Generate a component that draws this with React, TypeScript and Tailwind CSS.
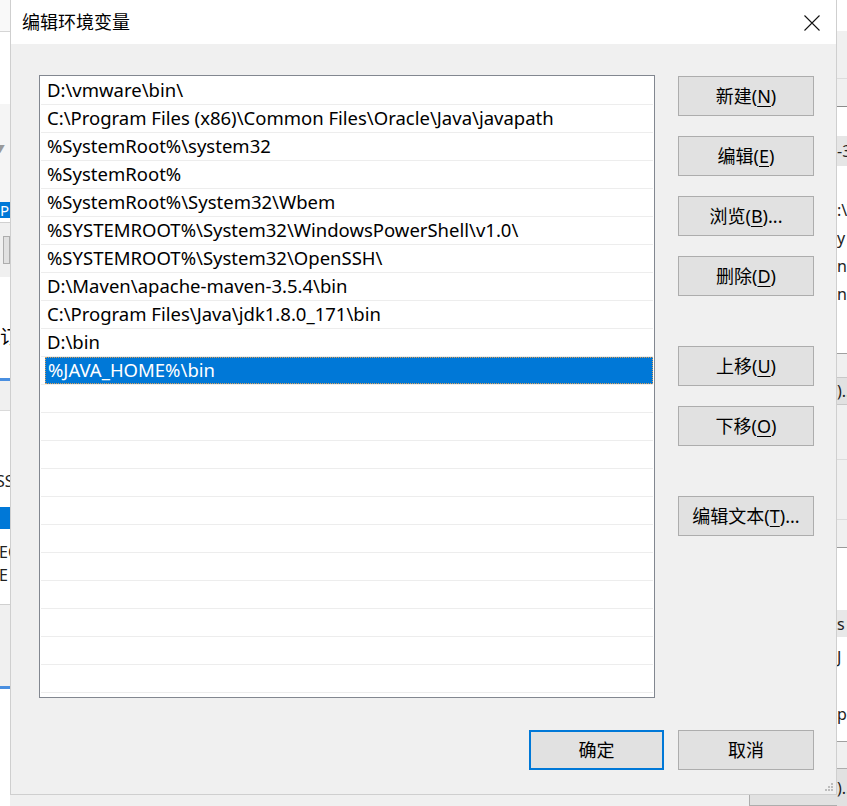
import React from 'react';

const paths = [
  'D:\\vmware\\bin\\',
  'C:\\Program Files (x86)\\Common Files\\Oracle\\Java\\javapath',
  '%SystemRoot%\\system32',
  '%SystemRoot%',
  '%SystemRoot%\\System32\\Wbem',
  '%SYSTEMROOT%\\System32\\WindowsPowerShell\\v1.0\\',
  '%SYSTEMROOT%\\System32\\OpenSSH\\',
  'D:\\Maven\\apache-maven-3.5.4\\bin',
  'C:\\Program Files\\Java\\jdk1.8.0_171\\bin',
  'D:\\bin',
  '%JAVA_HOME%\\bin',
];

const selected = 10;
const totalRows = 22;

const font = "font-['Noto_Sans','Noto_Sans_CJK_SC',sans-serif]";

function WinButton({ label, mnemonic, suffix = '', className = '' }: { label: string; mnemonic?: string; suffix?: string; className?: string }) {
  return (
    <button
      className={
        'flex h-[40px] w-[136px] items-center justify-center border border-[#adadad] bg-[#e1e1e1] text-[18px] leading-none text-black ' +
        className
      }
    >
      {label}
      {mnemonic && (
        <>
          (<span className="underline decoration-1 underline-offset-[3px]">{mnemonic}</span>)
        </>
      )}
      {suffix}
    </button>
  );
}

// strip of the window behind, left side
const LeftStrip = () => (
  <div className="flex w-[10px] shrink-0 flex-col overflow-hidden text-[16px] leading-none">
    <div className="h-[32px] border-b border-[#d5d5d5] bg-[#f9f9f9]" />
    <div className="h-[72px] bg-white" />
    <div className="flex h-[98px] items-center bg-[#f5f5f5] pb-[8px] text-[10px] text-[#9a9a9a]">
      <span className="-ml-[5px]">▼</span>
    </div>
    <div className="flex h-[16px] items-center whitespace-nowrap bg-[#0078d7] text-[15px] text-white">Pr</div>
    <div className="h-[5px] border-b border-[#d0d0d0] bg-white" />
    <div className="flex h-[54px] items-center bg-[#f0f0f0]">
      <div className="ml-[3px] h-[28px] w-[20px] border border-[#adadad] bg-[#e1e1e1]" />
    </div>
    <div className="flex h-[101px] items-center whitespace-nowrap bg-white pt-[20px] text-[19px] text-black">
      <span>订阅</span>
    </div>
    <div className="h-[3px] bg-[#4a8fe0]" />
    <div className="h-[30px] border-b border-[#dadada] bg-[#f0f0f0]" />
    <div className="flex h-[96px] flex-col justify-end whitespace-nowrap bg-white pb-[18px]">
      <span className="-ml-[4px] text-[#222]">SSH</span>
    </div>
    <div className="h-[22px] bg-[#0078d7]" />
    <div className="flex h-[75px] flex-col justify-center gap-[7px] whitespace-nowrap bg-white pb-[6px] text-[#222]">
      <span className="-ml-[1px]">EC</span>
      <span className="-ml-[1px]">E</span>
    </div>
    <div className="h-[82px] border-t border-[#d0d0d0] bg-[#f0f0f0]" />
    <div className="h-[3px] bg-[#4a8fe0]" />
    <div className="flex-1 bg-white" />
  </div>
);

// strip of the window behind, right side
const RightStrip = () => (
  <div className="flex min-w-0 flex-1 flex-col overflow-hidden whitespace-nowrap text-[16px] leading-none text-[#222]">
    <div className="h-[31px] bg-white" />
    <div className="h-[48px] border-b border-[#dcdcdc] bg-[#f0f0f0]" />
    <div className="h-[28px] border-b border-[#8c8c8c] bg-[#f0f0f0]" />
    <div className="h-[29px] bg-white" />
    <div className="flex h-[30px] items-center bg-[#e6e6e6]">-3</div>
    <div className="h-[30px] bg-white" />
    <div className="flex flex-col bg-white">
      {[':\\V', 'y', 'n', 'n'].map((t, i) => (
        <div key={i} className="flex h-[28px] items-center">
          {t}
        </div>
      ))}
    </div>
    <div className="h-[46px] border-b border-[#a0a0a0] bg-white" />
    <div className="h-[23px] bg-[#f0f0f0]" />
    <div className="flex h-[28px] items-center border-y border-[#c8c8c8] bg-[#e1e1e1]">)..</div>
    <div className="h-[55px] border-b border-[#dcdcdc] bg-[#f0f0f0]" />
    <div className="h-[60px] border-b border-[#dcdcdc] bg-[#f0f0f0]" />
    <div className="h-[28px] border-b border-[#9a9a9a] bg-[#f0f0f0]" />
    <div className="h-[62px] bg-white" />
    <div className="flex h-[27px] items-center bg-[#e8e8e8]">s</div>
    <div className="flex h-[105px] flex-col border-b border-[#a0a0a0] bg-white pt-[6px]">
      <div className="flex h-[28px] items-center">J</div>
      <div className="mt-[29px] flex h-[28px] items-center">p</div>
    </div>
    <div className="h-[26px] bg-[#f0f0f0]" />
    <div className="flex flex-1 items-center border-t border-[#adadad] bg-[#e1e1e1]">)..</div>
  </div>
);

const App = () => {
  return (
    <div className={'flex h-[806px] w-[847px] overflow-hidden bg-white ' + font}>
      <LeftStrip />

      <div className="flex w-[827px] shrink-0 flex-col">
        {/* Dialog */}
        <div className="relative flex h-[795px] flex-col border-x border-b border-[#cfcfcf] bg-[#f0f0f0]">
          {/* Title bar */}
          <div className="flex h-[44px] shrink-0 items-center justify-between bg-white pl-[11px] pr-[16px]">
            <span className="text-[18px] leading-none text-black">编辑环境变量</span>
            <svg width="16" height="16" viewBox="0 0 16 16" className="mt-[1px]">
              <path d="M0.5 0.5 L15.5 15.5 M15.5 0.5 L0.5 15.5" stroke="#111" strokeWidth="1.1" fill="none" />
            </svg>
          </div>

          {/* Body */}
          <div className="flex flex-col pl-[28px] pt-[31px]">
            <div className="flex">
              {/* List */}
              <div className="h-[623px] w-[616px] overflow-hidden border border-[#828790] bg-white pt-[1px]">
                {Array.from({ length: totalRows }).map((_, i) => {
                  const text = paths[i];
                  const isSel = i === selected;
                  return (
                    <div key={i} className="mx-[1px] flex h-[28px] items-stretch border-b border-[#ededed]">
                      {isSel ? (
                        <div className="ml-[4px] flex flex-1 items-center border border-dotted border-[#d9a05b] bg-[#0078d7] pl-[2px] text-[18.5px] leading-none text-white">
                          {text}
                        </div>
                      ) : (
                        <div className="flex flex-1 items-center pl-[6px] text-[18.5px] leading-none text-black">{text ?? ''}</div>
                      )}
                    </div>
                  );
                })}
              </div>

              {/* Action buttons */}
              <div className="ml-[23px] flex flex-col pt-[1px]">
                <WinButton label="新建" mnemonic="N" />
                <WinButton label="编辑" mnemonic="E" className="mt-[20px]" />
                <WinButton label="浏览" mnemonic="B" suffix="..." className="mt-[20px]" />
                <WinButton label="删除" mnemonic="D" className="mt-[20px]" />
                <WinButton label="上移" mnemonic="U" className="mt-[50px]" />
                <WinButton label="下移" mnemonic="O" className="mt-[20px]" />
                <WinButton label="编辑文本" mnemonic="T" suffix="..." className="mt-[50px]" />
              </div>
            </div>

            {/* OK / Cancel */}
            <div className="mt-[32px] flex w-[775px] justify-end gap-[14px]">
              <button className="flex h-[40px] w-[135px] items-center justify-center border-2 border-[#0078d7] bg-[#e1e1e1] text-[18px] leading-none text-black">
                确定
              </button>
              <WinButton label="取消" />
            </div>
          </div>

          {/* resize grip */}
          <svg width="10" height="10" viewBox="0 0 10 10" className="absolute bottom-[2px] right-[2px]">
            <rect x="7" y="1" width="2" height="2" fill="#bdbdbd" />
            <rect x="4" y="4" width="2" height="2" fill="#bdbdbd" />
            <rect x="7" y="4" width="2" height="2" fill="#bdbdbd" />
            <rect x="1" y="7" width="2" height="2" fill="#bdbdbd" />
            <rect x="4" y="7" width="2" height="2" fill="#bdbdbd" />
            <rect x="7" y="7" width="2" height="2" fill="#bdbdbd" />
          </svg>
        </div>

        {/* behind the dialog, below it */}
        <div className="flex flex-1">
          <div className="flex-1 bg-[#f0f0f0]" />
          <div className="w-[88px] border-b border-l border-[#adadad] bg-[#e1e1e1]" />
        </div>
      </div>

      <RightStrip />
    </div>
  );
};

export default App;
